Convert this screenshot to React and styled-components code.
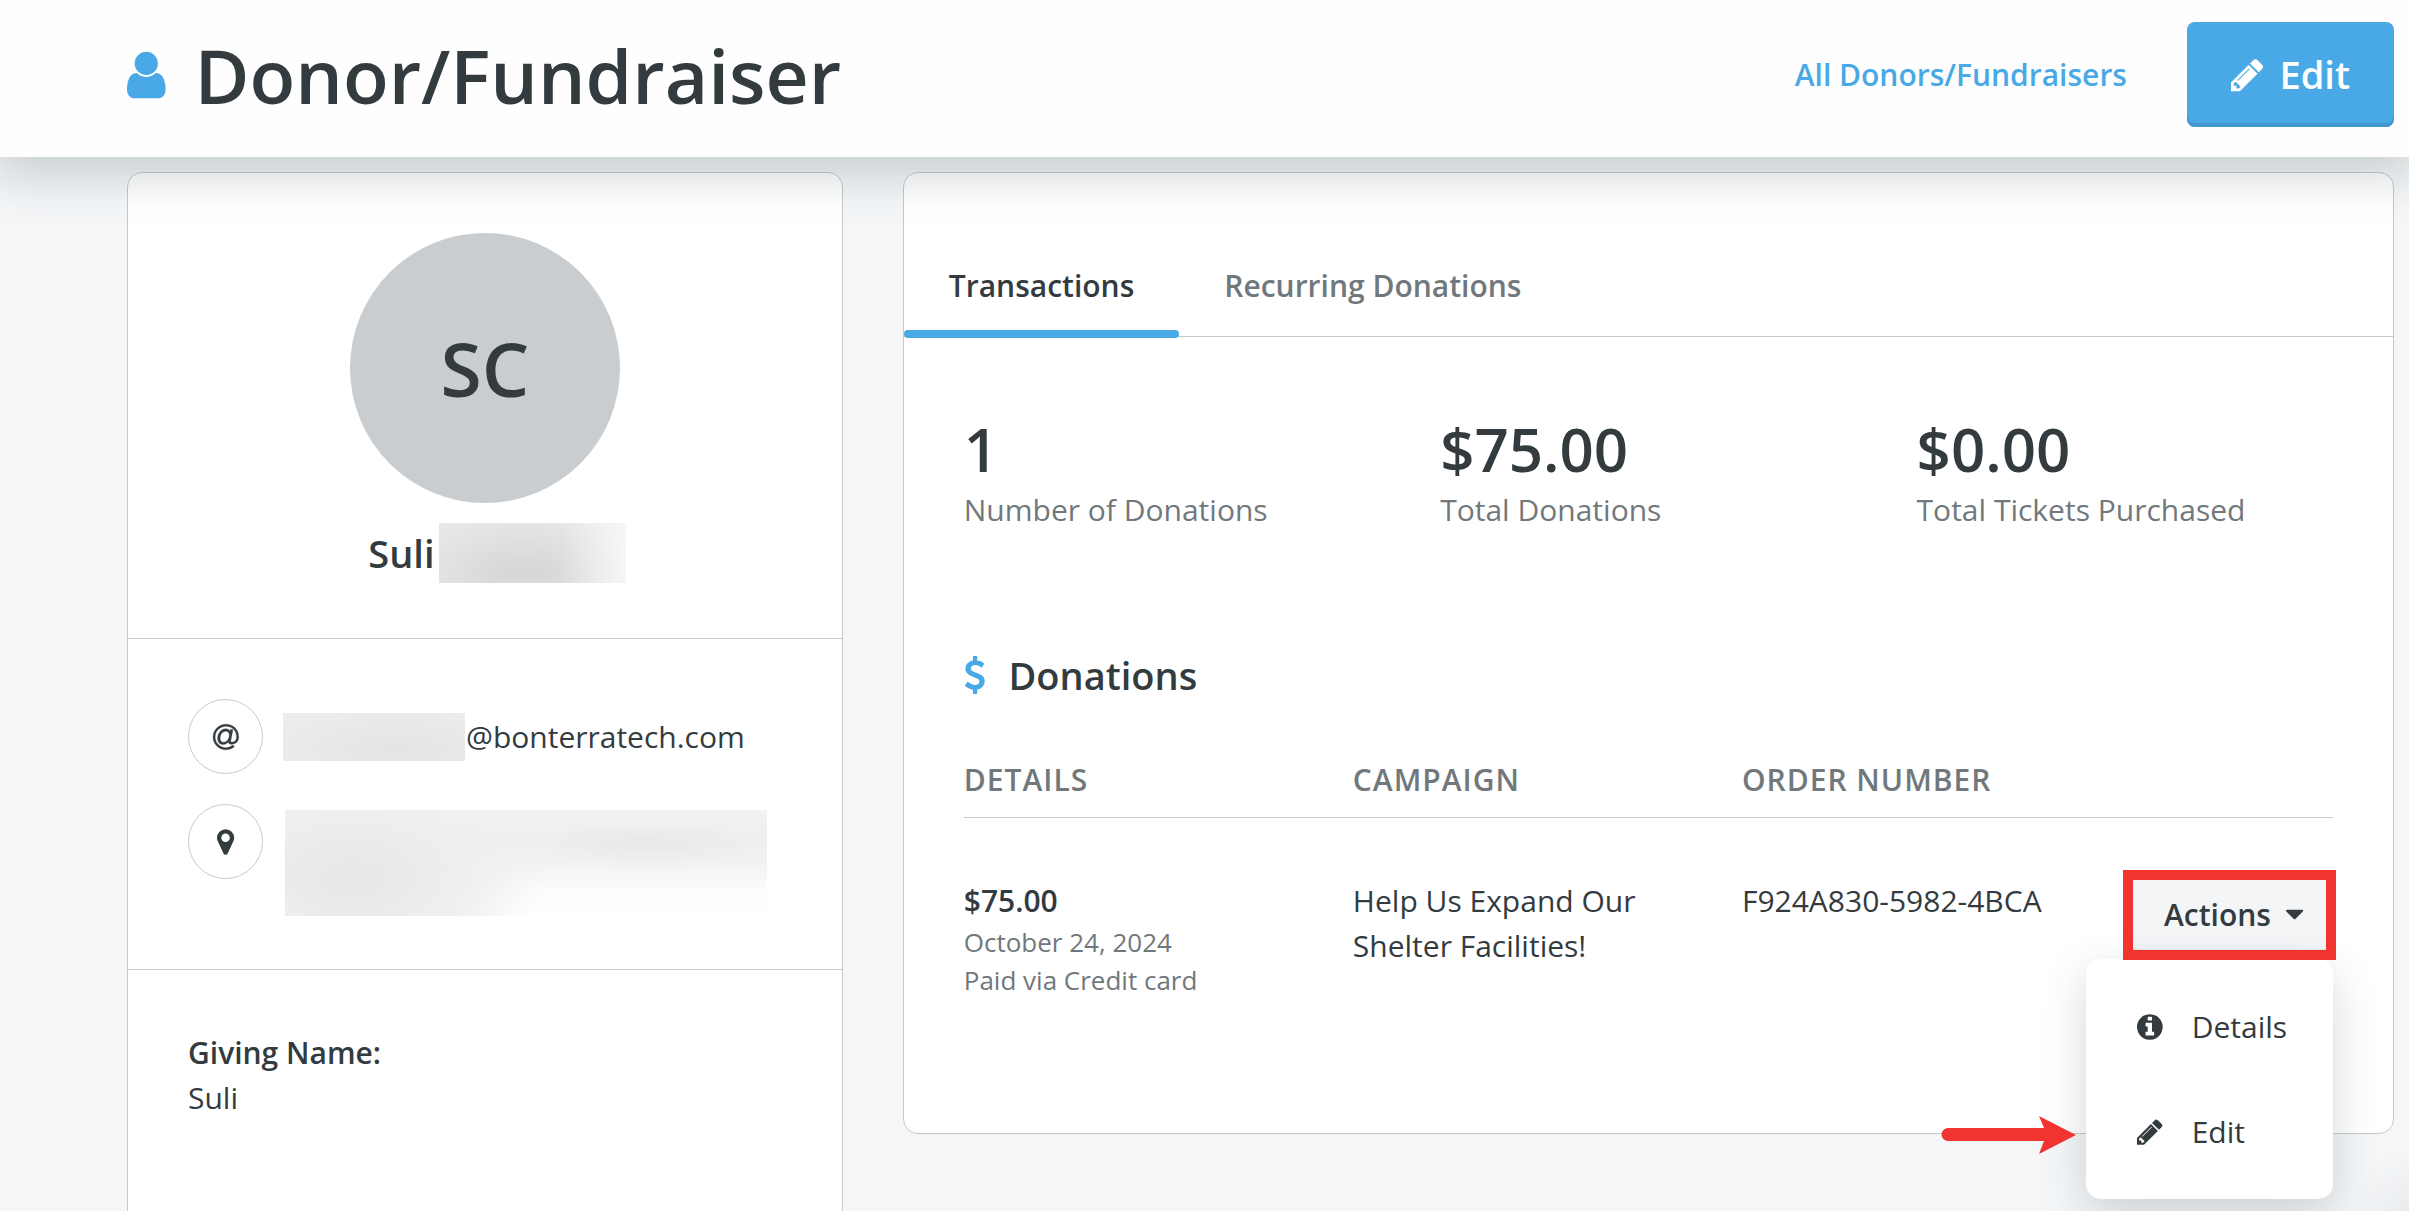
import React from "react";
import styled, { createGlobalStyle } from "styled-components";

const colors = {
  text: "#333b3f",
  muted: "#71787c",
  blue: "#49a9e6",
  blueDark: "#4298d0",
  border: "#c5c9cc",
  page: "#f4f6f8",
  red: "#f23431",
};

const GlobalStyle = createGlobalStyle`
  * {
    box-sizing: border-box;
  }
  body {
    margin: 0;
    background: ${colors.page};
    color: ${colors.text};
    font-family: "Open Sans", sans-serif;
    font-size: 30px;
    line-height: 45px;
  }
  h1, h2, p, ul, dl, dd {
    margin: 0;
    padding: 0;
  }
  button {
    font: inherit;
    color: inherit;
    border: 0;
    cursor: pointer;
  }
`;

const icons = {
  user: "M1536 1399q0 109-62.5 187t-150.5 78h-854q-88 0-150.5-78t-62.5-187q0-85 8.5-160.5t31.5-152 58.5-131 94-89 134.5-34.5q131 128 313 128t313-128q76 0 134.5 34.5t94 89 58.5 131 31.5 152 8.5 160.5zm-256-887q0 159-112.5 271.5t-271.5 112.5-271.5-112.5-112.5-271.5 112.5-271.5 271.5-112.5 271.5 112.5 112.5 271.5z",
  pencil:
    "M491 1536l91-91-235-235-91 91v107h128v128h107zm523-928q0-22-22-22-10 0-17 7l-542 542q-7 7-7 17 0 22 22 22 10 0 17-7l542-542q7-7 7-17zm-54-192l416 416-832 832h-416v-416l832-832zm683 96q0 53-37 90l-166 166-416-416 166-165q36-38 90-38 53 0 91 38l235 234q37 39 37 91z",
  at: "M1100 775q0-108-53.500-169t-147.500-61q-63 0-124 30.500t-110 84.500-79.500 137-30.500 180q0 112 53.500 173t150.500 61q96 0 176-66.500t122.500-166 42.500-203.500zm564 121q0 111-37 197t-98.500 135-131.500 74.500-145 27.500q-6 0-15.500.5t-16.500.5q-95 0-142-53-28-33-33-83-52 66-131.500 110t-173.500 44q-161 0-249.500-95.500t-88.500-269.500q0-157 66-290t179-210.500 246-77.500q87 0 155 35.500t106 99.500l2-19 11-56q1-6 5.500-12t9.500-6h118q5 0 13 11 5 5 3 16l-120 614q-5 24-5 48 0 39 12.500 52t44.500 13q28-1 57-5.500t73-24 77-50 57-89.500 24-137q0-292-174-466t-466-174q-130 0-248.500 51t-204 136.500-136.500 204-51 248.500 51 248.500 136.500 204 204 136.500 248.500 51q228 0 405-144 11-9 24-8t21 12l41 49q8 12 7 24-2 13-12 22-102 83-227.500 128t-258.500 45q-156 0-298-61t-245-164-164-245-61-298 61-298 164-245 245-164 298-61q344 0 556 212t212 556z",
  marker:
    "M1152 640q0-106-75-181t-181-75-181 75-75 181 75 181 181 75 181-75 75-181zm256 0q0 109-33 179l-364 774q-16 33-47.5 52t-67.5 19-67.5-19-46.5-52l-365-774q-33-70-33-179 0-212 150-362t362-150 362 150 150 362z",
  info: "M1152 1376v-160q0-14-9-23t-23-9h-96v-512q0-14-9-23t-23-9h-320q-14 0-23 9t-9 23v160q0 14 9 23t23 9h96v320h-96q-14 0-23 9t-9 23v160q0 14 9 23t23 9h448q14 0 23-9t9-23zm-128-896v-160q0-14-9-23t-23-9h-192q-14 0-23 9t-9 23v160q0 14 9 23t23 9h192q14 0 23-9t9-23zm640 416q0 209-103 385.5t-279.5 279.5-385.5 103-385.5-103-279.5-279.5-103-385.5 103-385.5 279.5-279.5 385.5-103 385.5 103 279.5 279.5 103 385.5z",
  dollar:
    "M1362 1185q0 153-99.5 263.5t-258.5 136.5v175q0 14-9 23t-23 9h-135q-13 0-22.5-9.5t-9.5-22.5v-175q-66-9-127.5-31t-101.5-44.5-74-48-46.5-37.5-17.5-18q-17-21-2-41l103-135q7-10 23-12 15-2 24 9l2 2q113 99 243 125 37 8 74 8 81 0 142.5-43t61.5-122q0-28-15-53t-33.5-42-58.5-37.5-66-32-80-32.5q-39-16-61.5-25t-61.5-26.5-62.5-31-56.5-35.5-53.5-42.5-43.5-49-35.5-58-21-66.5-8.5-78q0-138 98-242t255-134v-180q0-13 9.5-22.5t22.5-9.5h135q14 0 23 9t9 23v176q57 6 110.5 23t87 33.5 63.5 37.5 39 29 15 14q17 18 5 38l-81 146q-8 15-23 16-14 3-27-7-3-3-14.5-12t-39-26.5-58.5-32-74.5-26-85.5-11.5q-95 0-155 43t-60 111q0 26 8.5 48t29.5 41.5 39.5 33 56 31 60.5 27 70 27.5q53 20 81 31.5t76 35 75.5 42.5 62 50 53 63.5 31.5 76.5 13 94z",
  caret:
    "M1408 704q0 26-19 45l-448 448q-19 19-45 19t-45-19l-448-448q-19-19-19-45t19-45 45-19h896q26 0 45 19t19 45z",
};

// left edge and width of each glyph on the 1792 unit grid
const boxes = {
  user: [256, 1280],
  pencil: [128, 1536],
  at: [128, 1536],
  marker: [384, 1024],
  info: [128, 1536],
  dollar: [384, 1024],
  caret: [384, 1024],
};

const Svg = styled.svg`
  display: block;
  flex: none;
  height: ${props => props.$size}px;
  overflow: visible;
  fill: currentColor;
`;

const Icon = ({ name, size }) => {
  const [left, width] = boxes[name];
  return (
    <Svg $size={size} viewBox={`${left} 0 ${width} 1792`} aria-hidden="true">
      <path
        d={icons[name]}
        stroke="currentColor"
        strokeWidth={name === "at" ? 20 : 0}
      />
    </Svg>
  );
};

const Page = styled.div`
  height: 100vh;
  display: flex;
  flex-direction: column;
  overflow: hidden;
  background: radial-gradient(
    circle at 100% 100%,
    rgba(51, 59, 63, 0.06),
    transparent 60px
  );
`;

const Header = styled.header`
  position: relative;
  z-index: 1;
  flex: none;
  display: flex;
  align-items: center;
  gap: 60px;
  padding: 22px 15px 30px 127px;
  background: #fefefe;
  box-shadow: 0 12px 45px 6px rgba(43, 60, 66, 0.22);
`;

const TitleGroup = styled.div`
  flex: 1;
  display: flex;
  align-items: center;
  gap: 29px;
  color: ${colors.blue};
`;

const Title = styled.h1`
  font-size: 75px;
  font-weight: 600;
  line-height: 90px;
  color: ${colors.text};
`;

const HeaderLink = styled.a`
  color: ${colors.blue};
  font-weight: 600;
  text-decoration: none;
`;

const EditButton = styled.button`
  display: flex;
  align-items: center;
  gap: 16px;
  padding: 30px 44px;
  border-radius: 8px;
  background: ${colors.blue};
  box-shadow: inset 0 -4px 0 ${colors.blueDark};
  color: #fff;
  font-size: 38px;
  font-weight: 600;
`;

const Columns = styled.main`
  display: grid;
  grid-template-columns: minmax(0, 12fr) minmax(0, 25fr);
  align-items: start;
  gap: 60px;
  padding: 15px 15px 0 127px;
`;

const Card = styled.section`
  border: 1px solid ${colors.border};
  border-radius: 15px;
  background: #fff;
`;

const ProfileHead = styled.div`
  display: flex;
  flex-direction: column;
  align-items: center;
  gap: 19px;
  padding: 60px 60px 54px;
`;

const Avatar = styled.div`
  display: flex;
  align-items: center;
  justify-content: center;
  width: 270px;
  height: 270px;
  border-radius: 50%;
  background: #cacdd0;
  font-size: 75px;
  font-weight: 600;
`;

const Name = styled.h2`
  display: flex;
  align-items: center;
  gap: 4px;
  font-size: 38px;
  font-weight: 600;
  line-height: 62px;
`;

const Contacts = styled.ul`
  border: solid ${colors.border};
  border-width: 1px 0;
  padding: 60px 60px 90px;
  display: flex;
  flex-direction: column;
  gap: 30px;
  list-style: none;
`;

const Contact = styled.li`
  display: flex;
  align-items: center;
  gap: 20px;
  height: 75px;
`;

const Round = styled.span`
  display: flex;
  align-items: center;
  justify-content: center;
  flex: none;
  width: 75px;
  height: 75px;
  border: 1px solid ${colors.border};
  border-radius: 50%;
`;

const Email = styled.span`
  display: flex;
  align-items: center;
  gap: 1px;
`;

// runs past the end of the name, so it does not count fully towards its width
const HiddenName = styled.span`
  width: 187px;
  height: 60px;
  margin-right: -24px;
  background:
    linear-gradient(to right, transparent 65%, rgba(250, 250, 250, 0.8)),
    radial-gradient(ellipse at 45% 85%, #d7d9d9 15%, #e8e8e8 85%);
`;

const HiddenEmail = styled.span`
  width: 182px;
  height: 48px;
  background: radial-gradient(ellipse at 62% 75%, #e4e4e4, #e9e9e9 50%, #eeeeee);
`;

const HiddenAddress = styled.span`
  align-self: flex-start;
  flex: none;
  width: 482px;
  height: 106px;
  margin: 6px 0 0 2px;
  background:
    radial-gradient(ellipse at 75% 32%, #e9e9ea, transparent 22%),
    radial-gradient(ellipse 190px 110px at 14% 66%, #e7e8e9 10%, rgba(238, 239, 240, 0.9) 65%, transparent),
    linear-gradient(to bottom, #f2f2f2, #eeeeef 30%, #f2f2f2 50%, #fdfdfd 78%, #fff);
`;

const Giving = styled.dl`
  padding: 60px 60px 120px;
`;

const Term = styled.dt`
  font-weight: 600;
`;

const Tabs = styled.div`
  display: flex;
  margin-top: 68px;
  border-bottom: 1px solid ${colors.border};
`;

const Tab = styled.button`
  position: relative;
  padding: 22px 45px 28px;
  background: none;
  color: ${props => (props.$active ? colors.text : colors.muted)};
  font-weight: 600;

  &::after {
    content: "";
    display: ${props => (props.$active ? "block" : "none")};
    position: absolute;
    left: 0;
    right: 0;
    bottom: -2px;
    height: 8px;
    border-radius: 4px;
    background: ${colors.blue};
  }
`;

const Stats = styled.dl`
  display: grid;
  grid-template-columns: repeat(3, minmax(0, 1fr));
  gap: 60px;
  padding: 75px 60px 0;
`;

const Stat = styled.div`
  display: flex;
  flex-direction: column-reverse;
`;

const StatLabel = styled.dt`
  color: ${colors.muted};
`;

const StatValue = styled.dd`
  font-size: 60px;
  font-weight: 600;
  line-height: 75px;
`;

const Donations = styled.div`
  padding: 113px 60px 0;
`;

const SectionTitle = styled.h2`
  display: flex;
  align-items: center;
  gap: 23px;
  font-size: 38px;
  font-weight: 600;
  line-height: 60px;

  svg {
    color: ${colors.blue};
  }
`;

const Table = styled.table`
  width: 100%;
  margin-top: 45px;
  border-collapse: collapse;
  table-layout: fixed;

  th {
    padding: 7px 0 15px;
    border-bottom: 1px solid ${colors.border};
    color: ${colors.muted};
    font-weight: 600;
    letter-spacing: 1px;
    text-align: left;
    text-transform: uppercase;
  }
  th:last-child {
    width: 202px;
  }
  td {
    height: 315px;
    padding: 60px 0;
    vertical-align: top;
  }
`;

const Amount = styled.p`
  font-weight: 600;
`;

const Note = styled.p`
  color: ${colors.muted};
  font-size: 26px;
  line-height: 38px;
`;

const Campaign = styled.p`
  max-width: 300px;
`;

const Dropdown = styled.div`
  position: relative;
`;

const ActionsButton = styled.button`
  display: flex;
  align-items: center;
  justify-content: center;
  gap: 15px;
  width: 205px;
  height: 78px;
  margin-top: -3px;
  border-radius: 8px;
  background: #f3f5f7;
  box-shadow: inset 0 -4px 0 #e4e6e8;
  font-weight: 600;
`;

const Highlight = styled.span`
  position: absolute;
  z-index: 2;
  top: -5px;
  right: -3px;
  width: 213px;
  height: 90px;
  border: 10px solid ${colors.red};
  pointer-events: none;
`;

const Menu = styled.ul`
  position: absolute;
  z-index: 1;
  top: 84px;
  right: 0;
  width: 247px;
  padding: 15px 0;
  border-radius: 15px;
  background: #fff;
  box-shadow: 0 15px 45px rgba(43, 60, 66, 0.2);
  list-style: none;
`;

const MenuButton = styled.button`
  display: flex;
  align-items: center;
  gap: 29px;
  width: 100%;
  padding: 30px 51px;
  background: none;
`;

const Arrow = styled.svg`
  position: absolute;
  right: 257px;
  bottom: 45px;
  width: 135px;
  height: 38px;
  fill: ${colors.red};
`;

const App = () => (
  <Page>
    <GlobalStyle />
    <Header>
      <TitleGroup>
        <Icon name="user" size={54} />
        <Title>Donor/Fundraiser</Title>
      </TitleGroup>
      <HeaderLink href="#donors">All Donors/Fundraisers</HeaderLink>
      <EditButton type="button">
        <Icon name="pencil" size={38} />
        Edit
      </EditButton>
    </Header>

    <Columns>
      <Card>
        <ProfileHead>
          <Avatar>SC</Avatar>
          <Name>
            Suli
            <HiddenName />
          </Name>
        </ProfileHead>
        <Contacts>
          <Contact>
            <Round>
              <Icon name="at" size={30} />
            </Round>
            <Email>
              <HiddenEmail />
              @bonterratech.com
            </Email>
          </Contact>
          <Contact>
            <Round>
              <Icon name="marker" size={30} />
            </Round>
            <HiddenAddress />
          </Contact>
        </Contacts>
        <Giving>
          <Term>Giving Name:</Term>
          <dd>Suli</dd>
        </Giving>
      </Card>

      <Card>
        <Tabs role="tablist">
          <Tab type="button" role="tab" aria-selected="true" $active>
            Transactions
          </Tab>
          <Tab type="button" role="tab" aria-selected="false">
            Recurring Donations
          </Tab>
        </Tabs>
        <Stats>
          <Stat>
            <StatLabel>Number of Donations</StatLabel>
            <StatValue>1</StatValue>
          </Stat>
          <Stat>
            <StatLabel>Total Donations</StatLabel>
            <StatValue>$75.00</StatValue>
          </Stat>
          <Stat>
            <StatLabel>Total Tickets Purchased</StatLabel>
            <StatValue>$0.00</StatValue>
          </Stat>
        </Stats>
        <Donations>
          <SectionTitle>
            <Icon name="dollar" size={38} />
            Donations
          </SectionTitle>
          <Table>
            <thead>
              <tr>
                <th scope="col">Details</th>
                <th scope="col">Campaign</th>
                <th scope="col">Order Number</th>
                <th scope="col" aria-label="Actions" />
              </tr>
            </thead>
            <tbody>
              <tr>
                <td>
                  <Amount>$75.00</Amount>
                  <Note>October 24, 2024</Note>
                  <Note>Paid via Credit card</Note>
                </td>
                <td>
                  <Campaign>Help Us Expand Our Shelter Facilities!</Campaign>
                </td>
                <td>F924A830-5982-4BCA</td>
                <td>
                  <Dropdown>
                    <ActionsButton type="button" aria-expanded="true">
                      Actions
                      <Icon name="caret" size={30} />
                    </ActionsButton>
                    <Highlight />
                    <Menu>
                      <li>
                        <MenuButton type="button">
                          <Icon name="info" size={30} />
                          Details
                        </MenuButton>
                      </li>
                      <li>
                        <MenuButton type="button">
                          <Icon name="pencil" size={30} />
                          Edit
                        </MenuButton>
                      </li>
                      <Arrow viewBox="0 0 135 38" aria-hidden="true">
                        <path d="M7 12H103L98 0L135 19L98 38L103 25H7A6.500 6.500 0 0 1 7 12Z" />
                      </Arrow>
                    </Menu>
                  </Dropdown>
                </td>
              </tr>
            </tbody>
          </Table>
        </Donations>
      </Card>
    </Columns>
  </Page>
);

export default App;
